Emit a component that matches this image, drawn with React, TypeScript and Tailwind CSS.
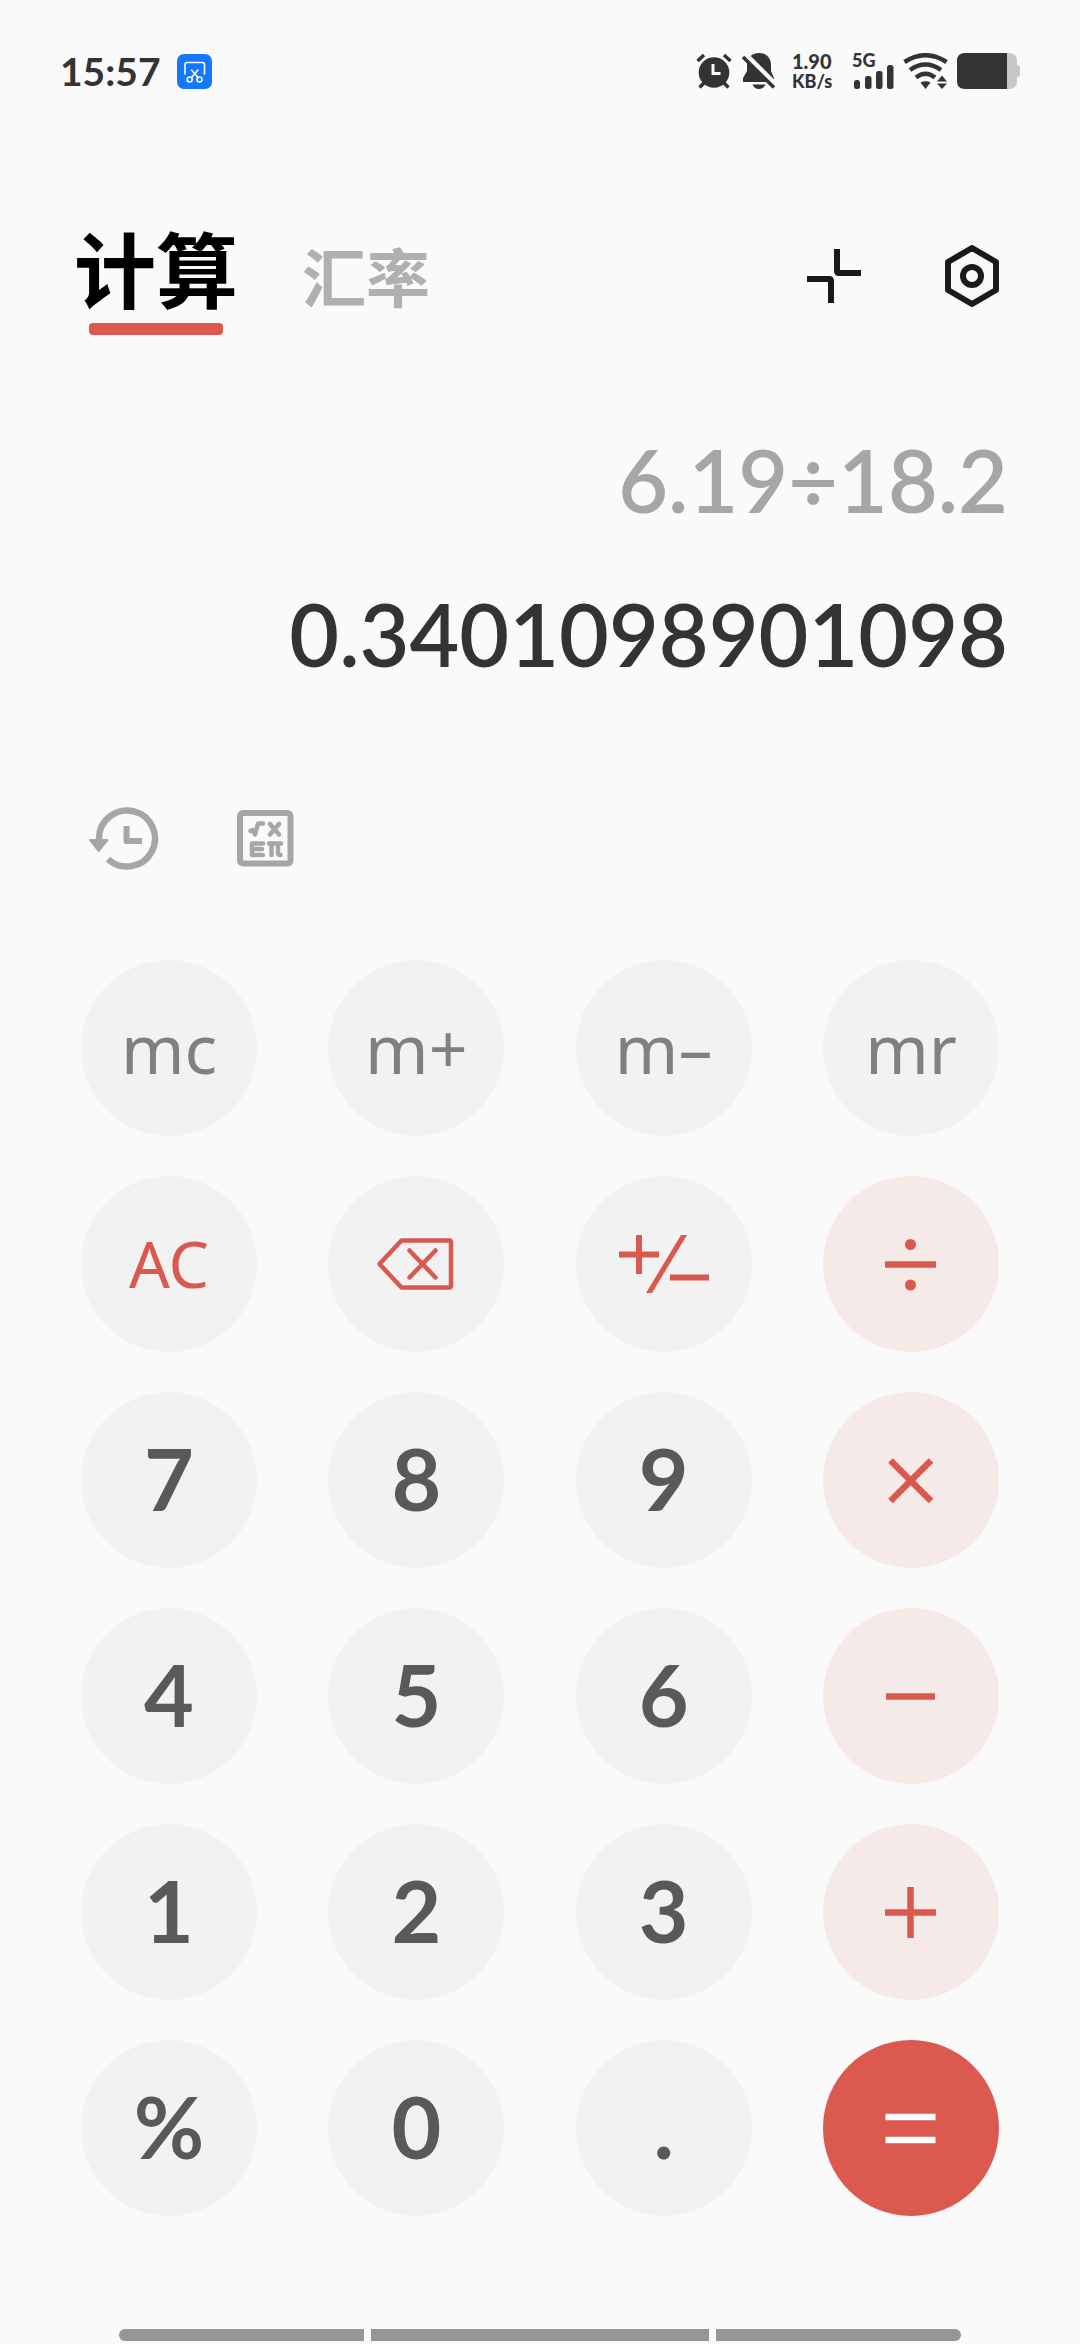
import type { ReactNode } from "react";

type Tone = "memory" | "action" | "operator" | "digit" | "equals";

interface KeyDef {
  label: string;
  tone: Tone;
  content: ReactNode;
}

const TONES: Record<Tone, string> = {
  memory: "bg-[#f2f2f2] text-[#808080] font-['Noto_Sans',sans-serif] text-[68px]",
  action: "bg-[#f2f2f2] text-[#d9594f] font-['Noto_Sans',sans-serif] text-[64px]",
  operator: "bg-[#f6eae8] text-[#d9594f]",
  digit: "bg-[#f2f2f2] text-[#595959] font-['Lato',sans-serif] font-bold text-[86px] pb-1",
  equals: "bg-[#db594f] text-white",
};

function Glyph({ children }: { children: ReactNode }) {
  return (
    <svg viewBox="0 0 100 100" className="size-[100px]" fill="none" stroke="currentColor" strokeWidth="6.5" aria-hidden="true">
      {children}
    </svg>
  );
}

const digit = (d: string): KeyDef => ({ label: d, tone: "digit", content: d });
const memory = (d: string): KeyDef => ({ label: d, tone: "memory", content: d });

const KEYS: KeyDef[] = [
  memory("mc"),
  memory("m+"),
  memory("m–"),
  memory("mr"),
  { label: "AC", tone: "action", content: "AC" },
  {
    label: "删除",
    tone: "action",
    content: (
      <Glyph>
        <path d="M13.500 50 35.500 26.500H83q2 0 2 2V71.500q0 2-2 2H35.500Z" strokeWidth="4.500" strokeLinejoin="round" />
        <path d="M43.500 36.500 69.500 63.500M69.500 36.500 43.500 63.500" strokeWidth="4.500" strokeLinecap="round" />
      </Glyph>
    ),
  },
  {
    label: "正负",
    tone: "action",
    content: (
      <Glyph>
        <path d="M5 40.500H45M25 21V60M56 63.500H95" strokeWidth="6" />
        <path d="M67 21h6L38 79h-6Z" fill="currentColor" stroke="none" />
      </Glyph>
    ),
  },
  {
    label: "除",
    tone: "operator",
    content: (
      <Glyph>
        <path d="M24 50.500H75" />
        <circle cx="49.500" cy="30.500" r="5.500" fill="currentColor" stroke="none" />
        <circle cx="49.500" cy="71" r="5.500" fill="currentColor" stroke="none" />
      </Glyph>
    ),
  },
  digit("7"),
  digit("8"),
  digit("9"),
  { label: "乘", tone: "operator", content: <Glyph><path d="M29.500 30.500 70 71M70 30.500 29.500 71" /></Glyph> },
  digit("4"),
  digit("5"),
  digit("6"),
  { label: "减", tone: "operator", content: <Glyph><path d="M25 50.500H74" /></Glyph> },
  digit("1"),
  digit("2"),
  digit("3"),
  { label: "加", tone: "operator", content: <Glyph><path d="M24 50.500H75M49.500 25V76" /></Glyph> },
  digit("%"),
  digit("0"),
  digit("."),
  { label: "等于", tone: "equals", content: <Glyph><path d="M24.500 39H74.500M24.500 62H74.500" /></Glyph> },
];

function StatusBar() {
  return (
    <div className="flex h-[142px] items-center justify-between px-[60px] font-['Lato',sans-serif] font-bold text-[#333333]">
      <div className="flex items-center gap-4">
        <span className="text-[39px] leading-none">15:57</span>
        <svg viewBox="0 0 35 35" className="size-[35px]" fill="none" stroke="#fff" strokeWidth="1.600" aria-hidden="true">
          <rect width="35" height="35" rx="7" fill="#1677ff" stroke="none" />
          <path d="M8 20V10.500q0-2 2-2H25.500q2 0 2 2V20" strokeLinecap="round" />
          <path d="M14.500 16 21 23.500M21 16 14.500 23.500" strokeLinecap="round" />
          <circle cx="12.700" cy="25.500" r="2.500" />
          <circle cx="22.500" cy="25.500" r="2.500" />
        </svg>
      </div>
      <div className="flex items-center">
        <svg viewBox="0 0 36 36" className="size-9" fill="none" stroke="#333" strokeWidth="3.500" aria-hidden="true">
          <circle cx="18" cy="19.500" r="15.300" fill="#333" stroke="none" />
          <path d="M1.500 8 8 2M34.500 8 28 2M8 30 3.500 34.500M28 30 32.500 34.500" />
          <path d="M17 11V20.500H24.500" stroke="#fafafa" strokeWidth="3" />
        </svg>
        <svg viewBox="0 0 34 36" className="ml-2.5 h-9 w-[34px]" aria-hidden="true">
          <path d="M17 0C9.500 0 5 5 5 12v6L1 25v4H32v-4L29 18v-6C29 5 24.500 0 17 0Z" fill="#333" />
          <path d="M10.500 31.500H23.500q-2 4.500-6.500 4.500t-6.500-4.500Z" fill="#333" />
          <path d="M3.500 2 34 32.500" stroke="#fafafa" strokeWidth="6" />
          <path d="M1 4 32 34.500" stroke="#333" strokeWidth="3.500" />
        </svg>
        <div className="ml-4 flex w-[44px] flex-col text-[20px] leading-[20px] font-black">
          <span>1.90</span>
          <span className="text-[18px]">KB/s</span>
        </div>
        <div className="ml-4 flex h-9 w-[43px] flex-col justify-between">
          <span className="text-[18px] leading-[14px] font-black">5G</span>
          <svg viewBox="0 0 43 24" className="-mt-3.5 h-6 w-[43px] shrink-0" fill="#333" aria-hidden="true">
            <rect x="2" y="15" width="6" height="9" rx="2.500" />
            <rect x="13" y="11" width="6.500" height="13" rx="2.500" />
            <rect x="24" y="6" width="6.500" height="18" rx="2.500" />
            <rect x="35" y="0" width="6.500" height="24" rx="2.500" />
          </svg>
        </div>
        <svg viewBox="0 0 46 36" className="ml-2 h-9 w-[46px]" fill="none" stroke="#333" strokeWidth="4.500" aria-hidden="true">
          <path d="M1.500 9Q22.500-4.500 43.500 9M7 17Q22.500 6 38 17M13 24.500Q22.500 17 32 24.500" />
          <path d="M17.500 29.500Q22.500 27 27.500 29.500L22.500 36ZM34 28.500 39 22.500 44 28.500ZM34 30.500H44L39 36Z" fill="#333" stroke="none" />
        </svg>
        <svg viewBox="0 0 63 36" className="ml-2 h-9 w-[63px]" aria-hidden="true">
          <path d="M50 0H52q8 0 8 8v4h.5q2.500 0 2.500 3v6q0 3-2.500 3H60v4q0 8-8 8H50Z" fill="#c8c8c8" />
          <path d="M50 0H8Q0 0 0 8V28q0 8 8 8H50Z" fill="#333" />
        </svg>
      </div>
    </div>
  );
}

function Header() {
  return (
    <header className="mt-[73px] flex h-[120px] items-center justify-between pr-[78px] pl-[74px]">
      <nav className="flex h-full items-end gap-[64px] font-['Noto_Sans_CJK_SC',sans-serif] font-bold">
        <button type="button" className="flex flex-col items-center">
          <span className="text-[82px] leading-[100px] text-black">计算</span>
          <span className="mt-1.5 h-3 w-[134px] rounded-[4px] bg-[#db594f]" />
        </button>
        <button type="button" className="pb-4 text-[64px] leading-[90px] text-[#b0b0b0]">
          汇率
        </button>
      </nav>
      <div className="flex items-center gap-[78px]">
        <button type="button" aria-label="小窗">
          <svg viewBox="0 0 60 64" className="h-16 w-[60px]" fill="none" stroke="#1a1a1a" strokeWidth="6" aria-hidden="true">
            <path d="M33 6V28q0 2 2 2H57M3 36H25q2 0 2 2V60" />
          </svg>
        </button>
        <button type="button" aria-label="设置">
          <svg viewBox="0 0 60 64" className="h-16 w-[60px]" fill="none" stroke="#1a1a1a" strokeWidth="6" strokeLinejoin="round" aria-hidden="true">
            <path d="M30 5 54 19V47L30 61 6 47V19Z" />
            <circle cx="30" cy="33" r="9" />
          </svg>
        </button>
      </div>
    </header>
  );
}

function Display() {
  return (
    <section className="mt-[68px] flex flex-col items-end px-[72px] text-right font-['Lato',sans-serif] text-[86px] leading-[154px] font-semibold">
      <div className="text-[#a6a6a6]">6.19÷18.2</div>
      <output className="text-[#333333]">0.3401098901098</output>
    </section>
  );
}

function Tools() {
  return (
    <div className="mt-[94px] flex items-center gap-[76px] px-[87px] text-[#a6a6a6]">
      <button type="button" aria-label="历史记录">
        <svg viewBox="0 0 72 66" className="h-[66px] w-[72px]" fill="none" stroke="currentColor" strokeWidth="6.500" aria-hidden="true">
          <path d="M12 36V33.500A28 28 0 1 1 21 54.100" />
          <path d="M3 35H20.500L11.500 46Z" fill="currentColor" strokeWidth="2" strokeLinejoin="round" />
          <path d="M39.500 21V36H55" strokeWidth="6" strokeLinejoin="round" />
        </svg>
      </button>
      <button type="button" aria-label="科学计算">
        <svg viewBox="0 0 60 60" className="size-[60px]" fill="none" stroke="currentColor" strokeWidth="4.500" strokeLinecap="round" strokeLinejoin="round" aria-hidden="true">
          <rect x="5" y="5" width="50.500" height="50.500" rx="3" strokeWidth="6" />
          <path d="M15.500 23 17.500 22 20 26.500 23 15.500H28M35 16 44 26.500M44 16 35 26.500M28 35.500H17V47H28M17 41H27M34 35.500H46M36.500 35.500V47M43 35.500V45q0 2 2.500 2" />
        </svg>
      </button>
    </div>
  );
}

function Keypad() {
  return (
    <div className="mt-[89px] grid grid-cols-[repeat(4,176px)] justify-between gap-y-10 px-[81px]">
      {KEYS.map((key) => (
        <button
          key={key.label}
          type="button"
          aria-label={key.label}
          className={`flex size-44 items-center justify-center rounded-full leading-none ${TONES[key.tone]}`}
        >
          {key.content}
        </button>
      ))}
    </div>
  );
}

function GestureBar() {
  return (
    <div className="mt-auto flex gap-[7px] px-[119px] pb-[3px]" aria-hidden="true">
      <span className="h-3 flex-[245] rounded-l-full bg-[#969696]" />
      <span className="h-3 flex-[338] bg-[#969696]" />
      <span className="h-3 flex-[245] rounded-r-full bg-[#969696]" />
    </div>
  );
}

export default function App() {
  return (
    <main className="flex min-h-screen flex-col bg-[#fafafa]">
      <StatusBar />
      <Header />
      <Display />
      <Tools />
      <Keypad />
      <GestureBar />
    </main>
  );
}
